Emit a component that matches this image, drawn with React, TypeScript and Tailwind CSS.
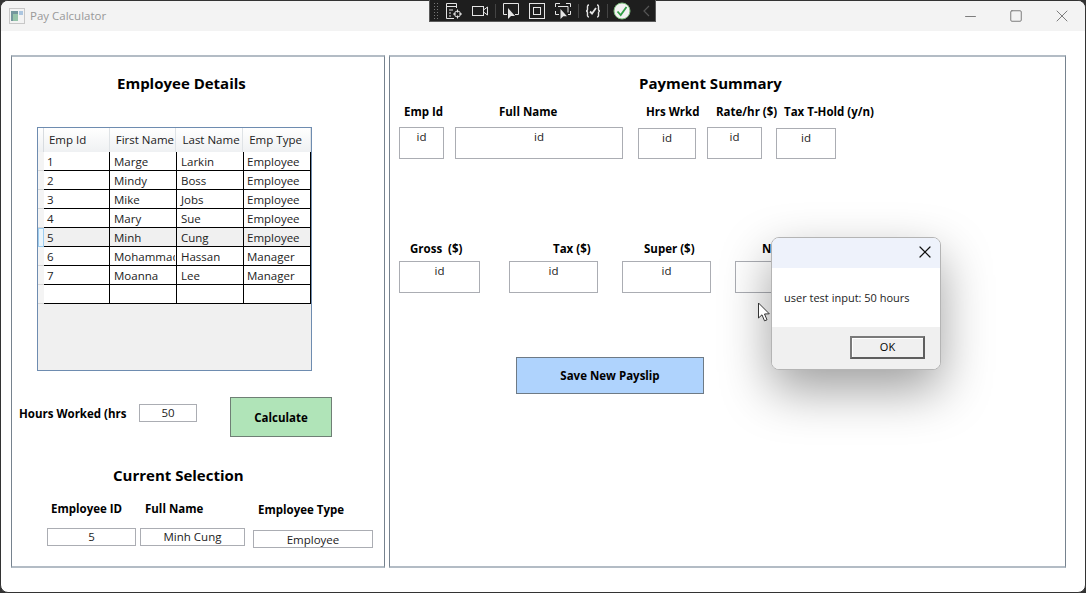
import { Minus, Square, X } from 'lucide-react'

const employees = [
  ['1', 'Marge', 'Larkin', 'Employee'],
  ['2', 'Mindy', 'Boss', 'Employee'],
  ['3', 'Mike', 'Jobs', 'Employee'],
  ['4', 'Mary', 'Sue', 'Employee'],
  ['5', 'Minh', 'Cung', 'Employee'],
  ['6', 'Mohammad', 'Hassan', 'Manager'],
  ['7', 'Moanna', 'Lee', 'Manager'],
  ['', '', '', ''],
]

const headers = [
  { label: 'Emp Id', width: 'w-[66px] pl-[5px]' },
  { label: 'First Name', width: 'w-[67px] pl-[6px]' },
  { label: 'Last Name', width: 'w-[67px] pl-[6px]' },
  { label: 'Emp Type', width: 'w-[68px] pl-[6px]' },
]

const cellWidths = ['w-[66px] pl-[3px]', 'w-[67px] pl-[4px]', 'w-[67px] pl-[4px]', 'w-[67px] pl-[3px]']

const Toolbar = () => (
  <div className="absolute left-[429px] top-0 flex h-[22px] w-[227px] items-center border-x border-b border-[#5a5a5a] bg-[#1e1e1e] pl-[3px]">
    <div className="h-[18px] w-[6px] bg-[radial-gradient(#777_1px,transparent_1px)] bg-[length:3px_3px]" />
    <svg className="ml-[6px] h-[18px] w-[18px]" viewBox="0 0 18 18" fill="none" stroke="#e4e4e4">
      <path d="M9 16.5H1.5v-15h10V6M1.5 4.5h10M4 8h4M4 11h2M4 14h2" />
      <circle cx="12.5" cy="12" r="3" />
      <path d="M12.5 7.5v3M12.5 13.5v3M8 12h3M14 12h3" />
    </svg>
    <svg className="ml-[8px] h-[18px] w-[18px]" viewBox="0 0 18 18" fill="none" stroke="#e4e4e4">
      <rect x="1.5" y="4.5" width="11" height="9" />
      <path d="M12.5 8l4-3v8l-4-3" />
    </svg>
    <div className="ml-[6px] h-[14px] w-px bg-[#444]" />
    <svg className="ml-[6px] h-[18px] w-[18px]" viewBox="0 0 18 18" fill="none">
      <path d="M5 12.5H1.5v-11h15v11H13" stroke="#e4e4e4" />
      <path d="M6 6l0 11 3-3 4 0z" fill="#e4e4e4" />
    </svg>
    <svg className="ml-[8px] h-[18px] w-[18px]" viewBox="0 0 18 18" fill="none" stroke="#e4e4e4">
      <rect x="1.5" y="1.5" width="15" height="15" />
      <rect x="5.5" y="5.5" width="7" height="7" />
    </svg>
    <svg className="ml-[8px] h-[18px] w-[18px]" viewBox="0 0 18 18" fill="none">
      <path d="M1.5 5V1.5H6M12 1.5h4.5V5M1.5 9v3.5H5M14 12.5h2.5V9M4 4.5h10v6" stroke="#e4e4e4" />
      <path d="M6.5 7l0 10 2.8-2.8 3.700 0z" fill="#e4e4e4" />
    </svg>
    <div className="ml-[6px] h-[14px] w-px bg-[#444]" />
    <svg className="ml-[5px] h-[18px] w-[18px]" viewBox="0 0 18 18" fill="none" stroke="#e4e4e4" strokeWidth="1.4">
      <path d="M5 3C3 3 3.500 5 3.500 7S2 9 2 9s1.500 0 1.500 2-.5 4 1.500 4M13 3c2 0 1.500 2 1.500 4S16 9 16 9s-1.500 0-1.500 2 .5 4-1.500 4" />
      <path d="M6 9.500l2 2 4-5.500" strokeWidth="1.800" />
    </svg>
    <div className="ml-[5px] h-[14px] w-px bg-[#444]" />
    <svg className="ml-[5px] h-[18px] w-[18px]" viewBox="0 0 18 18" fill="none">
      <circle cx="9" cy="9" r="8" fill="#f2f2f2" stroke="#7cc07c" />
      <path d="M4.500 9.500l3.200 3.500 5.800-8" stroke="#2f9e44" strokeWidth="1.800" />
    </svg>
    <svg className="ml-[12px] h-[12px] w-[7px]" viewBox="0 0 7 12" fill="none" stroke="#555" strokeWidth="1.200">
      <path d="M6 1L1 6l5 5" />
    </svg>
  </div>
)

const TitleBar = () => (
  <div className="flex h-[30px] shrink-0 items-center bg-[#f3f3f3] pl-[8px]">
    <svg className="h-[16px] w-[16px] opacity-70" viewBox="0 0 16 16">
      <rect x="0.500" y="0.500" width="15" height="15" fill="#f4f4f4" stroke="#b5b5b5" />
      <rect x="2" y="3" width="7" height="10" fill="#3f6f7a" />
      <rect x="4" y="6" width="5" height="7" fill="#6fb08a" />
      <rect x="10" y="3" width="4" height="4" fill="#8fb4d8" />
    </svg>
    <span className="ml-[5px] text-[11.500px] text-[#999]">Pay Calculator</span>
    <div className="ml-auto flex items-center text-[#7d7d7d]">
      <Minus size={17} strokeWidth={1} absoluteStrokeWidth className="mr-[30px]" />
      <Square size={14} strokeWidth={1} absoluteStrokeWidth className="mr-[29px]" />
      <X size={20} strokeWidth={1} absoluteStrokeWidth className="mr-[13px]" />
    </div>
  </div>
)

const EmployeeGrid = () => (
  <div className="ml-[25px] mt-[31px] h-[244px] w-[275px] overflow-hidden border border-[#6e8cb0] bg-[#f0f0f0] text-[11.500px] text-[#222]">
    <div className="flex h-[24px]">
      <div className="w-[6px] border-r border-[#d8dce0] bg-gradient-to-b from-white to-[#eef0f2]" />
      {headers.map((header) => (
        <div
          key={header.label}
          className={`${header.width} flex items-center whitespace-nowrap border-r border-[#dfe3e6] bg-gradient-to-b from-white to-[#eff1f3]`}
        >
          {header.label}
        </div>
      ))}
    </div>
    {employees.map((row, index) => (
      <div key={index} className="flex h-[19px]">
        <div
          className={
            index === 4
              ? 'w-[6px] border border-[#9ccdf0] bg-[#eaf5fc]'
              : 'w-[6px] border-b border-[#d6d6d6] bg-[#f4f4f4]'
          }
        />
        {row.map((cell, cellIndex) => (
          <div
            key={cellIndex}
            className={`${cellWidths[cellIndex]} overflow-hidden whitespace-nowrap border-b border-r border-black leading-[19px] ${
              index === 4 ? 'bg-[#f0f0f0]' : 'bg-white'
            }`}
          >
            <span className={cellIndex === 1 ? 'block w-[61px] overflow-hidden' : ''}>{cell}</span>
          </div>
        ))}
      </div>
    ))}
  </div>
)

const Field = ({ value, className }: { value: string; className: string }) => (
  <div className={`${className} shrink-0 border border-[#abadb3] bg-white text-center text-[11.500px] text-[#222]`}>
    {value}
  </div>
)

const LeftPanel = () => (
  <section className="flex h-[513px] w-[374px] shrink-0 flex-col border-x border-y-2 border-x-[#76828e] border-y-[#b3bcc5]">
    <h2 className="ml-[105px] mt-[15px] h-[24px] text-[15px] leading-[22px] font-bold text-black">Employee Details</h2>
    <EmployeeGrid />
    <div className="mt-[26px] flex h-[40px] items-start">
      <span className="ml-[7px] mt-[8px] w-[120px] text-[11.500px] font-bold text-black">Hours Worked (hrs</span>
      <Field value="50" className="ml-0 mt-[7px] h-[18px] w-[58px] leading-[16px]" />
      <button
        type="button"
        className="ml-[33px] h-[40px] w-[102px] border border-[#6f7f75] bg-[#b0e4b8] pt-[1px] text-[11.500px] font-bold text-black"
      >
        Calculate
      </button>
    </div>
    <h2 className="ml-[101px] mt-[27px] h-[24px] text-[15px] leading-[22px] font-bold text-black">Current Selection</h2>
    <div className="mt-[12px] flex h-[18px] items-center text-[11.500px] font-bold text-black">
      <span className="ml-[39px] w-[94px]">Employee ID</span>
      <span className="w-[113px]">Full Name</span>
      <span className="mt-[2px]">Employee Type</span>
    </div>
    <div className="mt-[10px] flex items-start">
      <Field value="5" className="ml-[35px] h-[18px] w-[89px] leading-[16px]" />
      <Field value="Minh Cung" className="ml-[4px] h-[18px] w-[105px] leading-[16px]" />
      <Field value="Employee" className="ml-[8px] mt-[2px] h-[18px] w-[120px] leading-[17px]" />
    </div>
  </section>
)

const RightPanel = () => (
  <section className="flex h-[513px] w-[677px] shrink-0 flex-col border-x border-y-2 border-x-[#76828e] border-y-[#b3bcc5]">
    <h2 className="ml-[249px] mt-[15px] h-[24px] text-[15px] leading-[22px] font-bold text-black">Payment Summary</h2>
    <div className="mt-[7px] flex h-[18px] items-center text-[11.500px] font-bold text-black">
      <span className="ml-[14px] w-[95px]">Emp Id</span>
      <span className="w-[147px]">Full Name</span>
      <span className="w-[70px]">Hrs Wrkd</span>
      <span className="w-[68px] whitespace-nowrap">Rate/hr ($)</span>
      <span className="whitespace-nowrap">Tax T-Hold (y/n)</span>
    </div>
    <div className="mt-[6px] flex items-start leading-[17px]">
      <Field value="id" className="ml-[9px] h-[32px] w-[45px]" />
      <Field value="id" className="ml-[11px] h-[32px] w-[168px]" />
      <Field value="id" className="ml-[15px] mt-[1px] h-[31px] w-[58px]" />
      <Field value="id" className="ml-[11px] h-[32px] w-[55px]" />
      <Field value="id" className="ml-[14px] mt-[1px] h-[31px] w-[60px]" />
    </div>
    <div className="mt-[81px] flex h-[18px] items-center text-[11.500px] font-bold text-black">
      <span className="ml-[20px] w-[143px] whitespace-pre">Gross  ($)</span>
      <span className="w-[91px]">Tax ($)</span>
      <span className="w-[118px]">Super ($)</span>
      <span>Net ($)</span>
    </div>
    <div className="mt-[3px] flex items-start leading-[17px]">
      <Field value="id" className="ml-[9px] h-[32px] w-[81px]" />
      <Field value="id" className="ml-[29px] h-[32px] w-[89px]" />
      <Field value="id" className="ml-[24px] h-[32px] w-[89px]" />
      <Field value="id" className="ml-[24px] h-[32px] w-[89px]" />
    </div>
    <button
      type="button"
      className="ml-[126px] mt-[64px] h-[37px] w-[188px] border border-[#6e7a85] bg-[#afd3fd] text-[11.500px] font-bold text-black"
    >
      Save New Payslip
    </button>
  </section>
)

const MessageBox = () => (
  <div className="absolute left-[771px] top-[237px] flex h-[133px] w-[170px] flex-col overflow-hidden rounded-[8px] border border-[#b4b4b4] bg-white shadow-[0_20px_50px_rgba(0,0,0,0.38)]">
    <div className="flex h-[30px] shrink-0 items-center justify-end bg-[#eef2fb] pb-[2px] pr-[5px]">
      <X size={20} strokeWidth={1.2} absoluteStrokeWidth className="text-[#111]" />
    </div>
    <div className="flex h-[59px] shrink-0 items-center pl-[12px] pt-[1px] text-[11px] text-[#222]">user test input: 50 hours</div>
    <div className="flex flex-1 items-start justify-end bg-[#f0f0f0] pr-[15px] pt-[9px]">
      <button
        type="button"
        className="h-[23px] w-[75px] border-2 border-t-[#7a7a7a] border-l-[#7a7a7a] border-r-[#5e5e5e] border-b-[#5e5e5e] bg-[#f0f0f0] text-[11px] text-black shadow-[inset_1px_1px_0_#fff]"
      >
        OK
      </button>
    </div>
  </div>
)

const Cursor = () => (
  <svg className="absolute left-[757px] top-[302px] h-[21px] w-[14px]" viewBox="0 0 14 21">
    <path d="M1.500 1v15l3.500-3.200 2.500 6 2.500-1-2.500-5.800 4.800-.2z" fill="#fff" stroke="#333" strokeWidth="1" />
  </svg>
)

export default function App() {
  return (
    <div className="relative h-[593px] w-[1086px] overflow-hidden bg-[#333] font-['Open_Sans',sans-serif]">
      <div className="flex h-[593px] flex-col overflow-hidden rounded-[8px] border border-[#333] bg-white">
        <TitleBar />
        <main className="flex gap-[4px] pl-[10px] pt-[24px]">
          <LeftPanel />
          <RightPanel />
        </main>
      </div>
      <Toolbar />
      <MessageBox />
      <Cursor />
    </div>
  )
}
